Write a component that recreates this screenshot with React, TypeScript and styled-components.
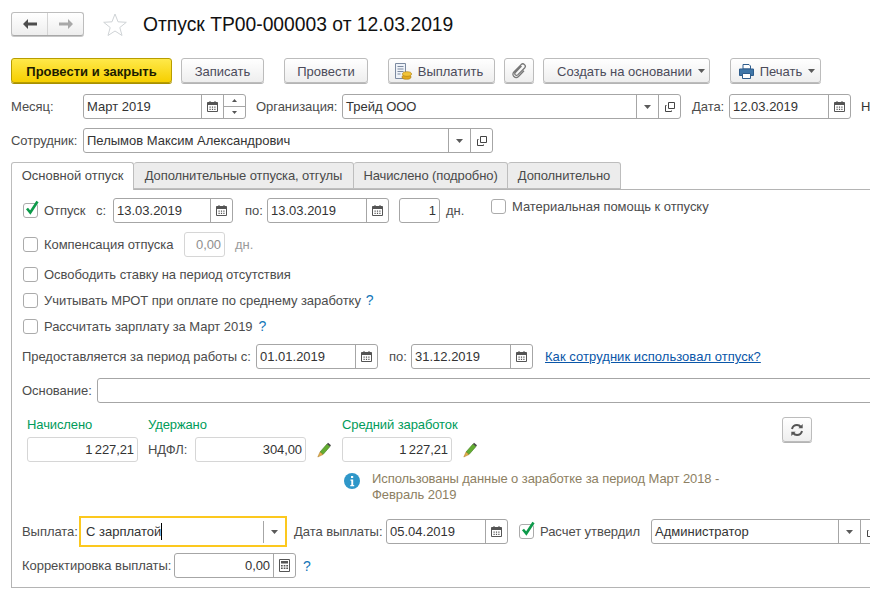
import React from "react";
import styled, { createGlobalStyle } from "styled-components";

const Global = createGlobalStyle`
  html, body { margin: 0; padding: 0; background: #fff; }
  body { width: 870px; height: 592px; overflow: hidden; font-family: "Liberation Sans", Arial, sans-serif; font-size: 13px; color: #4a4a4a; }
`;

const Page = styled.div`
  width: 870px; height: 592px; overflow: hidden; padding: 12px 0 0 11px; box-sizing: border-box;
`;
const Header = styled.div`
  display: flex; align-items: center; height: 24px;
`;
const NavGroup = styled.div`
  display: flex; width: 73px; height: 24px; box-sizing: border-box; border: 1px solid #bdbdbd; border-bottom-color: #a8a8a8; border-radius: 3px;
  background: linear-gradient(#ffffff, #eeeeee); box-shadow: 0 1px 0 #c8c8c8;
`;
const NavCell = styled.div<{ $divider?: boolean }>`
  flex: 1; display: flex; align-items: center; justify-content: center;
  ${p => p.$divider ? "border-left: 1px solid #d4d4d4;" : ""}
`;
const StarWrap = styled.div`
  margin-left: 18px; width: 26px; height: 24px; display: flex; align-items: center; justify-content: center;
`;
const Title = styled.h1`
  margin: 1px 0 0 15px; font-size: 19.3px; font-weight: 400; color: #111; white-space: nowrap;
`;
const Toolbar = styled.div`
  display: flex; margin-top: 22px; height: 26px;
`;
const Button = styled.div<{ $w: number; $ml?: number; $primary?: boolean; $shiftL?: number; $shiftR?: number }>`
  width: ${p => p.$w}px; margin-left: ${p => p.$ml ?? 0}px; height: 25px; box-sizing: border-box; padding-top: 1px;
  padding-left: ${p => p.$shiftL ?? 0}px; padding-right: ${p => p.$shiftR ?? 0}px;
  display: flex; align-items: center; justify-content: center; gap: 6px; border-radius: 3px; white-space: nowrap;
  border: 1px solid ${p => p.$primary ? "#b79d00" : "#bcbcbc"};
  background: ${p => p.$primary ? "linear-gradient(#ffe94a, #f6cf00)" : "linear-gradient(#ffffff, #eeeeee)"};
  box-shadow: 0 1px 0 ${p => p.$primary ? "#a89000" : "#b4b4b4"};
  color: ${p => p.$primary ? "#1c1c00" : "#4b4b5a"};
  font-weight: ${p => p.$primary ? 700 : 400};
`;
const Row = styled.div<{ $mt: number; $h?: number }>`
  display: flex; align-items: center; margin-top: ${p => p.$mt}px; height: ${p => p.$h ?? 25}px; white-space: nowrap;
`;
const Label = styled.div<{ $w?: number; $ml?: number; $dim?: boolean }>`
  ${p => p.$w ? `width: ${p.$w}px;` : ""} margin-left: ${p => p.$ml ?? 0}px; flex: none; letter-spacing: -0.05px; color: ${p => p.$dim ? "#9a9a9a" : "#4c4c4c"};
`;
const Field = styled.div<{ $w: number; $ml?: number; $plain?: boolean }>`
  display: flex; flex: none; width: ${p => p.$w}px; margin-left: ${p => p.$ml ?? 0}px; height: 25px; box-sizing: border-box;
  border: 1px solid ${p => p.$plain ? "#d6d6d6" : "#a6a6a6"}; border-radius: 3px; background: #fff;
`;
const Value = styled.div<{ $right?: boolean; $dim?: boolean }>`
  flex: 1; min-width: 0; padding: 0 3px; line-height: 23px; color: ${p => p.$dim ? "#8f8f8f" : "#333"}; text-align: ${p => p.$right ? "right" : "left"};
  ${p => p.$right ? "letter-spacing: -0.1px; word-spacing: -1px;" : ""}
`;
const Seg = styled.div`
  flex: none; width: 21px; display: flex; align-items: center; justify-content: center; border-left: 1px solid #a6a6a6;
`;
const SpinSeg = styled(Seg)`
  flex-direction: column;
`;
const SpinCell = styled.div<{ $line?: boolean }>`
  flex: 1; width: 100%; display: flex; align-items: center; justify-content: center; ${p => p.$line ? "border-top: 1px solid #a6a6a6;" : ""}
`;
const Cut = styled.span`
  color: #333;
`;
const Tabs = styled.div`
  display: flex; margin-top: 9px; height: 27px; position: relative; z-index: 1;
`;
const Tab = styled.div<{ $w: number; $active?: boolean }>`
  width: ${p => p.$w}px; box-sizing: border-box; height: ${p => p.$active ? 28 : 27}px; text-align: center; line-height: 26px;
  letter-spacing: ${p => p.$active ? 0 : -0.1}px;
  border: 1px solid #bdbdbd; border-left-width: ${p => p.$active ? 1 : 0}px; border-bottom-width: ${p => p.$active ? 0 : 1}px; border-radius: 3px 3px 0 0;
  background: ${p => p.$active ? "#fff" : "#ececec"}; color: #4a4a4a;
`;
const Panel = styled.div`
  width: 900px; height: 399px; box-sizing: border-box; border: 1px solid #b4b4b4; padding: 8px 0 0 10px;
`;
const CheckBox = styled.div<{ $ml?: number }>`
  flex: none; position: relative; width: 15px; height: 15px; box-sizing: border-box; margin-left: ${p => p.$ml ?? 1}px; margin-right: 6px;
  border: 1px solid #ababab; border-radius: 3px; background: #fff;
`;
const Tick = styled.svg`
  position: absolute; left: 0; top: -4px; overflow: visible;
`;
const Help = styled.span<{ $ml?: number }>`
  margin-left: ${p => p.$ml ?? 7}px; color: #1476b8; font-size: 14px;
`;
const TopLabel = styled.div`
  position: relative; top: -4px; display: flex; align-items: center;
`;
const LinkText = styled.a`
  margin-left: 12px; color: #0a56a8; text-decoration: underline; letter-spacing: 0.05px;
`;
const Stats = styled.div`
  display: flex; align-items: flex-start; margin-top: 14px; height: 45px; white-space: nowrap;
`;
const StatCol = styled.div<{ $ml: number; $w?: number }>`
  flex: none; margin-left: ${p => p.$ml}px; ${p => p.$w ? `width: ${p.$w}px;` : ""}
`;
const GreenTitle = styled.div`
  height: 16px; line-height: 16px; margin-bottom: 4px; color: #009b5a; letter-spacing: -0.1px;
`;
const StatRow = styled.div`
  display: flex; align-items: center;
`;
const PencilWrap = styled.div`
  flex: none; margin-left: 11px; width: 14px; height: 16px; display: flex;
`;
const RefreshBtn = styled.div<{ $ml: number }>`
  flex: none; margin-left: ${p => p.$ml}px; width: 30px; height: 25px; box-sizing: border-box; display: flex; align-items: center; justify-content: center;
  border: 1px solid #bcbcbc; border-radius: 3px; background: linear-gradient(#fff, #eee); box-shadow: 0 1px 0 #b4b4b4;
`;
const InfoRow = styled.div`
  display: flex; margin-top: 9px; height: 32px; margin-left: 322px;
`;
const InfoText = styled.div`
  margin-left: 12px; line-height: 16px; color: #8d7f63; white-space: nowrap; letter-spacing: -0.08px;
`;
const InfoIcon = styled.div`
  flex: none; width: 16px; height: 16px; margin-top: 2px;
`;
const Focus = styled.div`
  flex: none; display: flex; align-items: center; width: 208px; height: 31px; box-sizing: border-box; border: 2px solid #fcc81e; background: #fff;
`;
const FocusValue = styled.div`
  flex: 1; padding-left: 5px; color: #333; display: flex; align-items: center;
`;
const Caret = styled.span`
  display: inline-block; width: 1px; height: 17px; background: #000;
`;
const FocusSeg = styled.div`
  flex: none; width: 21px; height: 22px; display: flex; align-items: center; justify-content: center; border-left: 1px solid #a6a6a6;
`;

const Cal = () => (
  <svg width="11" height="11" viewBox="0 0 11 11">
    <path d="M2.500 0h1v2h-1zM7.500 0h1v2h-1z" fill="#555" />
    <path d="M.5 1.500h10v9H.5z" fill="#fff" stroke="#555" />
    <path d="M.5 1.500h10V4H.5z" fill="#555" />
    <path d="M2.500 5.500h1.200v1.200H2.500zM4.900 5.500h1.200v1.200H4.900zM7.300 5.500h1.200v1.200H7.300zM2.500 7.800h1.200V9H2.500zM4.900 7.800h1.200V9H4.900zM7.300 7.800h1.200V9H7.300z" fill="#555" />
  </svg>
);
const Drop = () => (
  <svg width="7" height="4" viewBox="0 0 7 4"><path d="M0 0h7L3.500 4z" fill="#5a5a5a" /></svg>
);
const Open = () => (
  <svg width="10" height="10" viewBox="0 0 10 10" fill="none" stroke="#444">
    <path d="M3.500.5h6v6h-6z" />
    <path d="M1.500 3.500h-1v6h6v-1" />
  </svg>
);
const Arrow = ({ dir, color }: { dir: "l" | "r"; color: string }) => (
  <svg width="14" height="10" viewBox="0 0 14 10">
    <path d={dir === "l" ? "M0 5l5-5v3.500h9v3H5V10z" : "M14 5L9 0v3.500H0v3h9V10z"} fill={color} />
  </svg>
);
const Pencil = () => (
  <svg width="14" height="16" viewBox="0 0 14 16">
    <path d="M3 10l7-8 3 2.500-7 8z" fill="#63ad31" stroke="#3f7a1d" strokeWidth=".6" />
    <path d="M10 2l1-1.200 3 2.500-1 1.200z" fill="#444" />
    <path d="M3 10l3 2.500L.8 15z" fill="#e2b04a" stroke="#a8782a" strokeWidth=".5" />
  </svg>
);
const Check = () => (
  <Tick width="16" height="16" viewBox="0 0 16 16">
    <path d="M3 8.500l3.300 4L13.500 1.500" fill="none" stroke="#0d9a4a" strokeWidth="2.600" />
  </Tick>
);

export default function App() {
  return (
    <Page>
      <Global />
      <Header>
        <NavGroup>
          <NavCell><Arrow dir="l" color="#4d4d4d" /></NavCell>
          <NavCell $divider><Arrow dir="r" color="#a8a8a8" /></NavCell>
        </NavGroup>
        <StarWrap>
          <svg width="24" height="23" viewBox="0 0 24 23">
            <path d="M12 1l3 7.800 8.300.5-6.500 5.200 2.200 8L12 18l-7 4.500 2.200-8L.7 9.300 9 8.800z" fill="#fff" stroke="#cfd3d6" />
          </svg>
        </StarWrap>
        <Title>Отпуск ТР00-000003 от 12.03.2019</Title>
      </Header>

      <Toolbar>
        <Button $w={161} $primary>Провести и закрыть</Button>
        <Button $w={83} $ml={9}>Записать</Button>
        <Button $w={84} $ml={20}>Провести</Button>
        <Button $w={107} $ml={20} $shiftR={6}>
          <svg width="18" height="17" viewBox="0 0 18 17">
            <path d="M1.500.5h10v15h-10z" fill="#eef2f8" stroke="#7c8aa0" />
            <path d="M3.500 3.500h6M3.500 6h6M3.500 8.500h6M3.500 11h3" stroke="#7c8aa0" />
            <ellipse cx="12.500" cy="14" rx="4.500" ry="2.300" fill="#e2a81c" stroke="#a87a10" strokeWidth=".6" />
            <ellipse cx="13" cy="11" rx="4.500" ry="2.300" fill="#f2c438" stroke="#a87a10" strokeWidth=".6" />
          </svg>
          Выплатить
        </Button>
        <Button $w={30} $ml={9}>
          <svg width="15" height="16" viewBox="0 0 15 16" fill="none" stroke="#777" strokeWidth="1.300">
            <path d="M9.500 3L3.300 9.500c-1.500 1.600.8 3.900 2.400 2.400L12.600 5c2.200-2.300-1.300-5.600-3.500-3.400L1.900 9c-3 3.100 1.600 7.500 4.600 4.500l5.500-5.700" />
          </svg>
        </Button>
        <Button $w={167} $ml={9} $shiftL={9}>Создать на основании <Drop /></Button>
        <Button $w={91} $ml={20} $shiftL={3}>
          <svg width="15" height="15" viewBox="0 0 15 15">
            <path d="M4 .5h6l1.500 1.500v3h-7.500z" fill="#fff" stroke="#2f5d8c" />
            <path d="M.5 5h14v6.500H.5z" fill="#3f76a8" stroke="#2f5d8c" />
            <path d="M3.500 9.500h8v5h-8z" fill="#fff" stroke="#2f5d8c" />
          </svg>
          Печать <Drop />
        </Button>
      </Toolbar>

      <Row $mt={10}>
        <Label $w={72}>Месяц:</Label>
        <Field $w={163}>
          <Value>Март 2019</Value>
          <Seg><Cal /></Seg>
          <SpinSeg>
            <SpinCell><svg width="5" height="3" viewBox="0 0 5 3"><path d="M0 3h5L2.500 0z" fill="#555" /></svg></SpinCell>
            <SpinCell $line><svg width="5" height="3" viewBox="0 0 5 3"><path d="M0 0h5L2.500 3z" fill="#555" /></svg></SpinCell>
          </SpinSeg>
        </Field>
        <Label $w={86} $ml={10}>Организация:</Label>
        <Field $w={339}>
          <Value>Трейд ООО</Value>
          <Seg><Drop /></Seg>
          <Seg><Open /></Seg>
        </Field>
        <Label $w={37} $ml={11}>Дата:</Label>
        <Field $w={122}>
          <Value>12.03.2019</Value>
          <Seg><Cal /></Seg>
        </Field>
        <Label $ml={10}><Cut>Н</Cut></Label>
      </Row>

      <Row $mt={9}>
        <Label $w={72}>Сотрудник:</Label>
        <Field $w={410}>
          <Value>Пелымов Максим Александрович</Value>
          <Seg><Drop /></Seg>
          <Seg><Open /></Seg>
        </Field>
      </Row>

      <Tabs>
        <Tab $w={123} $active>Основной отпуск</Tab>
        <Tab $w={220}>Дополнительные отпуска, отгулы</Tab>
        <Tab $w={154}>Начислено (подробно)</Tab>
        <Tab $w={113}>Дополнительно</Tab>
      </Tabs>

      <Panel>
        <Row $mt={0}>
          <CheckBox><Check /></CheckBox>
          <Label $w={52}>Отпуск</Label>
          <Label $w={17}>с:</Label>
          <Field $w={120}>
            <Value>13.03.2019</Value>
            <Seg><Cal /></Seg>
          </Field>
          <Label $w={22} $ml={12}>по:</Label>
          <Field $w={122}>
            <Value>13.03.2019</Value>
            <Seg><Cal /></Seg>
          </Field>
          <Field $w={41} $ml={10}>
            <Value $right>1</Value>
          </Field>
          <Label $w={45} $ml={6}>дн.</Label>
          <TopLabel>
            <CheckBox $ml={0}></CheckBox>
            <Label>Материальная помощь к отпуску</Label>
          </TopLabel>
        </Row>
        <Row $mt={9}>
          <CheckBox />
          <Label $w={140}>Компенсация отпуска</Label>
          <Field $w={41} $plain>
            <Value $right $dim>0,00</Value>
          </Field>
          <Label $ml={10} $dim>дн.</Label>
        </Row>
        <Row $mt={9} $h={16}>
          <CheckBox />
          <Label>Освободить ставку на период отсутствия</Label>
        </Row>
        <Row $mt={10} $h={16}>
          <CheckBox />
          <Label>Учитывать МРОТ при оплате по среднему заработку</Label>
          <Help $ml={5}>?</Help>
        </Row>
        <Row $mt={10} $h={16}>
          <CheckBox />
          <Label>Рассчитать зарплату за Март 2019</Label>
          <Help $ml={6}>?</Help>
        </Row>
        <Row $mt={10}>
          <Label $w={234}>Предоставляется за период работы с:</Label>
          <Field $w={122}>
            <Value>01.01.2019</Value>
            <Seg><Cal /></Seg>
          </Field>
          <Label $w={22} $ml={11}>по:</Label>
          <Field $w={122}>
            <Value>31.12.2019</Value>
            <Seg><Cal /></Seg>
          </Field>
          <LinkText>Как сотрудник использовал отпуск?</LinkText>
        </Row>
        <Row $mt={9}>
          <Label $w={75}>Основание:</Label>
          <Field $w={800} />
        </Row>

        <Stats>
          <StatCol $ml={5} $w={111}>
            <GreenTitle>Начислено</GreenTitle>
            <Field $w={111} $plain><Value $right>1 227,21</Value></Field>
          </StatCol>
          <StatCol $ml={10}>
            <GreenTitle>Удержано</GreenTitle>
            <StatRow>
              <Label $w={47}>НДФЛ:</Label>
              <Field $w={111} $plain><Value $right>304,00</Value></Field>
              <PencilWrap><Pencil /></PencilWrap>
            </StatRow>
          </StatCol>
          <StatCol $ml={11}>
            <GreenTitle>Средний заработок</GreenTitle>
            <StatRow>
              <Field $w={110} $plain><Value $right>1 227,21</Value></Field>
              <PencilWrap><Pencil /></PencilWrap>
            </StatRow>
          </StatCol>
          <RefreshBtn $ml={305}>
            <svg width="14" height="14" viewBox="0 0 14 14" fill="none" stroke="#555" strokeWidth="2">
              <path d="M2 6c.6-2.500 2.500-4 5-4 1.700 0 3 .8 4 2" />
              <path d="M12 8c-.6 2.500-2.500 4-5 4-1.700 0-3-.8-4-2" />
              <path d="M12.700 1v4.300H8.400z" fill="#555" stroke="none" />
              <path d="M1.300 13V8.700h4.300z" fill="#555" stroke="none" />
            </svg>
          </RefreshBtn>
        </Stats>

        <InfoRow>
          <InfoIcon>
            <svg width="16" height="16" viewBox="0 0 16 16">
              <circle cx="8" cy="8" r="8" fill="#2f97c9" />
              <path d="M7 3h2.200v2H7zM6.500 6.500h2.700V12h1v1.200H6.300V12h1V7.700h-.8z" fill="#fff" />
            </svg>
          </InfoIcon>
          <InfoText>
            Использованы данные о заработке за период Март 2018 -<br />Февраль 2019
          </InfoText>
        </InfoRow>

        <Row $mt={13} $h={31}>
          <Label $w={57}>Выплата:</Label>
          <Focus>
            <FocusValue>С зарплатой<Caret /></FocusValue>
            <FocusSeg><Drop /></FocusSeg>
          </Focus>
          <Label $w={92} $ml={7}>Дата выплаты:</Label>
          <Field $w={122}>
            <Value>05.04.2019</Value>
            <Seg><Cal /></Seg>
          </Field>
          <CheckBox $ml={11}><Check /></CheckBox>
          <Label $w={111}>Расчет утвердил</Label>
          <Field $w={232}>
            <Value>Администратор</Value>
            <Seg><Drop /></Seg>
            <Seg><Open /></Seg>
          </Field>
        </Row>
        <Row $mt={6}>
          <Label $w={152}>Корректировка выплаты:</Label>
          <Field $w={122}>
            <Value $right>0,00</Value>
            <Seg>
              <svg width="11" height="13" viewBox="0 0 11 13">
                <path d="M.5.500h10v12H.5z" fill="#fff" stroke="#555" />
                <path d="M2 2h7v2.500H2zM2 6h1.700v1.500H2zM4.700 6h1.700v1.500H4.700zM7.300 6H9v1.500H7.300zM2 8.500h1.700V10H2zM4.700 8.500h1.700V10H4.700zM7.300 8.500H9V10H7.300z" fill="#555" />
              </svg>
            </Seg>
          </Field>
          <Help>?</Help>
        </Row>
      </Panel>
    </Page>
  );
}
